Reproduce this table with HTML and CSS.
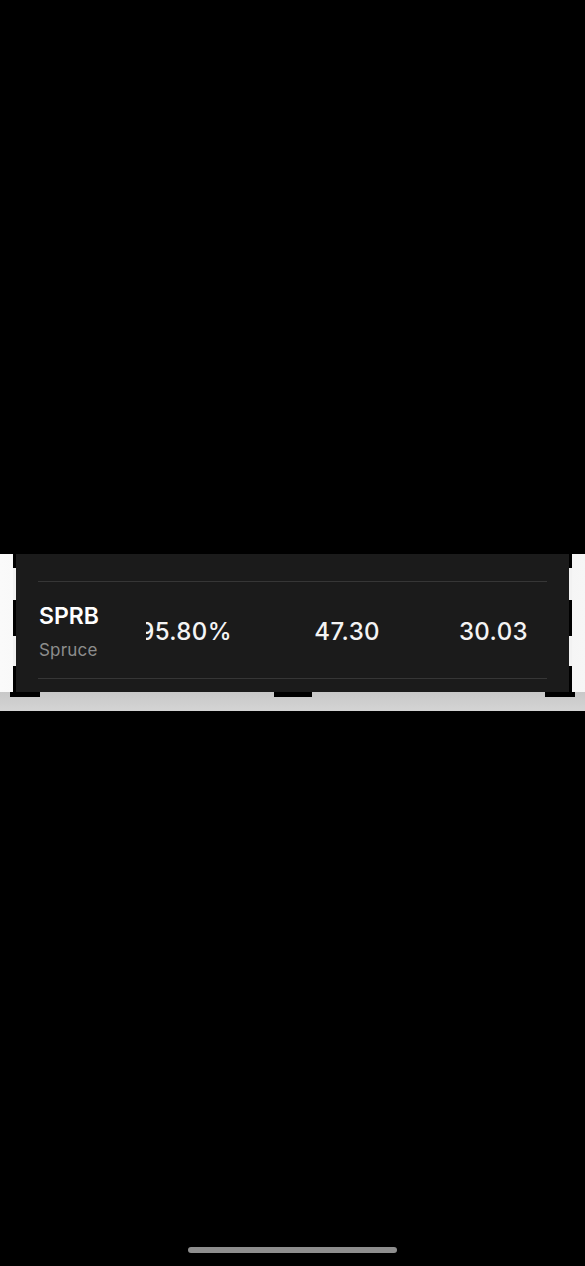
FILE: index.html
```html
<!DOCTYPE html>
<html lang="en">
<head>
    <meta charset="UTF-8">
    <meta name="viewport" content="width=device-width, initial-scale=1.0">
    <title>Watchlist</title>
    <link rel="stylesheet" href="styles.css">
</head>
<body>
    <div class="top-space"></div>

    <!-- Quote strip -->
    <div class="strip">
        <div class="card">
            <div class="quote-row">
                <div class="name-cell">
                    <div class="ticker">SPRB</div>
                    <div class="company">Spruce</div>
                </div>
                <div class="num-cell"><span>95.80%</span></div>
                <div class="num-cell"><span>47.30</span></div>
                <div class="num-cell"><span>30.03</span></div>
            </div>
            <!-- little notches on the card border -->
            <span class="notch notch-l1"></span>
            <span class="notch notch-l2"></span>
            <span class="notch notch-r1"></span>
            <span class="notch notch-r2"></span>
        </div>
        <div class="tabs">
            <span class="tab tab-left"></span>
            <span class="tab tab-mid"></span>
            <span class="tab tab-right"></span>
        </div>
    </div>

    <div class="filler"></div>
    <div class="home-indicator"></div>
</body>
</html>
```

FILE: styles.css
```css
body {
    font-family: Inter, "Noto Sans", sans-serif;
    background-color: #000;
    margin: 0;
    padding: 0;
    min-height: 1266px;
    display: flex;
    flex-direction: column;
}

.top-space {
    height: 554px;
    flex: none;
}

.strip {
    height: 157px;
    flex: none;
    display: flex;
    flex-direction: column;
    background: linear-gradient(90deg, #fafafa 0%, #e6e6e6 50%, #f6f6f6 100%);
}

.card {
    position: relative;
    height: 138px;
    margin: 0 13px;
    background-color: #1b1b1b;
    border-left: 3px solid #000;
    border-right: 3px solid #000;
    padding-top: 27px;
    box-sizing: border-box;
}

.notch {
    position: absolute;
    width: 3px;
    height: 32px;
    background-color: #f2f2f2;
}

.notch-l1 { left: -3px; top: 14px; }
.notch-l2 { left: -3px; top: 82px; height: 30px; }
.notch-r1 { right: -3px; top: 14px; }
.notch-r2 { right: -3px; top: 82px; height: 30px; }

.tabs {
    position: relative;
    flex: 1;
    background: linear-gradient(180deg, #c8c8c8 0%, #d4d4d4 100%);
}

.tab {
    position: absolute;
    top: 0;
    height: 5px;
    background-color: #000;
}

.tab-left { left: 10px; width: 30px; }
.tab-mid { left: 274px; width: 38px; }
.tab-right { left: 545px; width: 30px; }

.quote-row {
    display: grid;
    grid-template-columns: 108px 86px 148px 148px;
    align-items: center;
    height: 98px;
    margin: 0 22px;
    border-top: 1px solid #363636;
    border-bottom: 1px solid #363636;
    box-sizing: border-box;
}

.name-cell {
    display: flex;
    flex-direction: column;
    gap: 11px;
    padding-left: 1px;
    padding-top: 3px;
}

.ticker {
    color: #fff;
    font-size: 23px;
    font-weight: 600;
    line-height: 26px;
}

.company {
    color: #8d8d8d;
    font-size: 17px;
    line-height: 20px;
    letter-spacing: 0.2px;
}

.num-cell {
    display: flex;
    justify-content: flex-end;
    overflow: hidden;
    white-space: nowrap;
    padding-top: 4px;
    color: #f4f4f4;
    font-size: 24px;
    font-weight: 500;
    line-height: 30px;
    letter-spacing: 0.4px;
}

.filler {
    flex: 1;
}

.home-indicator {
    width: 209px;
    height: 6px;
    margin: 0 auto 13px;
    border-radius: 3px;
    background-color: #8e8e8e;
}
```
